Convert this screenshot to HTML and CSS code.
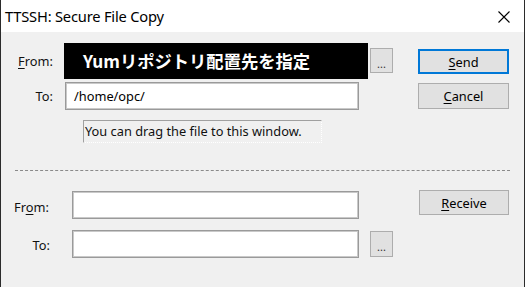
FILE: index.html
```html
<!DOCTYPE html>
<html>
<head>
<meta charset="utf-8">
<link rel="stylesheet" href="styles.css">
</head>
<body>
<div class="window">
  <div class="titlebar">
    <span class="title">TTSSH: Secure File Copy</span>
    <svg class="close" width="12" height="12" viewBox="0 0 12 12"><path d="M0.5 0.5 L11.5 11.5 M11.5 0.5 L0.5 11.5" stroke="#000" stroke-width="1.1" fill="none"/></svg>
  </div>
  <div class="content">
    <div class="row r1">
      <div class="label l1"><u>F</u>rom:</div>
      <div class="mask">Yumリポジトリ配置先を指定</div>
      <div class="btn dots d1">...</div>
      <div class="btn def send"><u>S</u>end</div>
    </div>
    <div class="row r2">
      <div class="label l2">To:</div>
      <div class="field f2">/home/opc/</div>
      <div class="btn cancel"><u>C</u>ancel</div>
    </div>
    <div class="hint">You can drag the file to this window.</div>
    <div class="sep"></div>
    <div class="row r4">
      <div class="label l4">Fr<u>o</u>m:</div>
      <div class="field f4"></div>
      <div class="btn receive"><u>R</u>eceive</div>
    </div>
    <div class="row r5">
      <div class="label l5">To:</div>
      <div class="field f5"></div>
      <div class="btn dots d5">...</div>
    </div>
  </div>
</div>
</body>
</html>
```
FILE: styles.css
```css
html, body { margin: 0; padding: 0; }
body { width: 525px; height: 287px; overflow: hidden; background: #f0f0f0; font-family: "Noto Sans", "Open Sans", sans-serif; }
.window { width: 523px; height: 287px; border-left: 1px solid #2b2b2b; border-right: 1px solid #2b2b2b; background: #f0f0f0; }
.titlebar { height: 32px; background: #fff; display: flex; align-items: flex-start; }
.title { font-size: 14.7px; color: #000; margin-left: 4px; margin-top: 6px; line-height: 20px; letter-spacing: -0.2px; }
.close { margin-left: auto; margin-right: 14px; margin-top: 11px; }
.content { display: flex; flex-direction: column; align-items: flex-start; }
.row { display: flex; align-items: flex-start; }
.label { font-size: 12.8px; color: #111; line-height: 16px; }
u { text-decoration: underline; text-underline-offset: 2px; text-decoration-thickness: 1px; }
.r1 { margin-top: 11px; }
.l1 { width: 46px; padding-left: 17px; margin-top: 10px; }
.mask { width: 304px; height: 36px; background: #000; color: #fff; font-family: "Noto Sans CJK JP", sans-serif; font-weight: 700; font-size: 17.3px; line-height: 36px; box-sizing: border-box; padding-left: 19px; }
.btn { box-sizing: border-box; background: #e1e1e1; border: 1px solid #adadad; font-size: 12.8px; color: #000; display: flex; align-items: center; justify-content: center; }
.dots { width: 23px; font-size: 11px; color: #333; padding-top: 5px; letter-spacing: 0; }
.d1 { height: 25px; margin-left: 2px; margin-top: 5px; }
.send { width: 91px; height: 25px; margin-left: 25px; margin-top: 6px; }
.def { border: 2px solid #0078d7; }
.r2 { margin-top: 3px; }
.l2 { width: 52px; padding-right: 12px; text-align: right; margin-top: 6px; }
.field { box-sizing: border-box; height: 28px; background: #fff; border: 1px solid #9a9a9a; box-shadow: inset 0 0 0 1px #c9c9c9; font-size: 12.8px; color: #000; padding-left: 8px; line-height: 26px; }
.f2 { width: 294px; }
.cancel { width: 91px; height: 26px; margin-left: 59px; margin-top: 1px; }
.hint { margin-left: 82px; margin-top: 10px; width: 239px; height: 23px; box-sizing: border-box; border-top: 1px solid #a0a0a0; border-left: 1px solid #a0a0a0; border-right: 1px dotted #fff; border-bottom: 1px dotted #fff; font-size: 12.8px; color: #111; line-height: 20px; padding-left: 1px; }
.sep { margin-left: 14px; margin-top: 27px; width: 495px; height: 0; border-top: 1px dashed #8a8a8a; }
.r4 { margin-top: 20px; }
.l4 { width: 58px; padding-left: 13px; margin-top: 8px; }
.f4, .f5 { width: 287px; }
.receive { width: 90px; height: 25px; margin-left: 60px; margin-top: -1px; }
.r5 { margin-top: 11px; }
.l5 { width: 49px; padding-right: 22px; text-align: right; margin-top: 7px; }
.d5 { height: 26px; margin-left: 11px; margin-top: 1px; }
```
